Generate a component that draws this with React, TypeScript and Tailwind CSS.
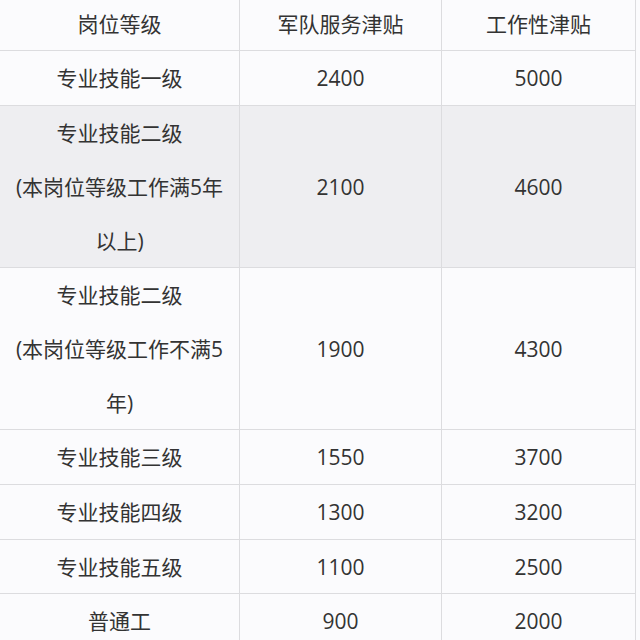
type Row = {
  grade: string[]
  service: string
  work: string
  shaded?: boolean
  h: string
}

const rows: Row[] = [
  { grade: ['专业技能一级'], service: '2400', work: '5000', h: 'h-[55px]' },
  {
    grade: ['专业技能二级', '(本岗位等级工作满5年', '以上)'],
    service: '2100',
    work: '4600',
    shaded: true,
    h: 'h-[162px]',
  },
  {
    grade: ['专业技能二级', '(本岗位等级工作不满5', '年)'],
    service: '1900',
    work: '4300',
    h: 'h-[162px]',
  },
  { grade: ['专业技能三级'], service: '1550', work: '3700', h: 'h-[55px]' },
  { grade: ['专业技能四级'], service: '1300', work: '3200', h: 'h-[55px]' },
  { grade: ['专业技能五级'], service: '1100', work: '2500', h: 'h-[54px]' },
  { grade: ['普通工'], service: '900', work: '2000', h: 'h-[55px]' },
]

function Cell({ children, className = '' }: { children: React.ReactNode; className?: string }) {
  return (
    <div className={`flex flex-col items-center justify-center text-center border-r border-b border-[#dcdcdf] ${className}`}>
      {children}
    </div>
  )
}

export default function App() {
  return (
    <div
      className="w-[640px] h-[640px] overflow-hidden bg-[#fbfbfd] text-[#333333] text-[21px] leading-[54px]"
      style={{ fontFamily: '"Open Sans", "Noto Sans CJK SC", sans-serif' }}
    >
      <div className="grid grid-cols-[240px_202px_194px]">
        {/* Header */}
        <Cell className="h-[51px] pb-[2px]">岗位等级</Cell>
        <Cell className="h-[51px] pb-[2px]">军队服务津贴</Cell>
        <Cell className="h-[51px] pb-[2px]">工作性津贴</Cell>

        {rows.map((r, i) => {
          const bg = r.shaded ? 'bg-[#eeeef1]' : ''
          return (
            <div key={i} className="contents">
              <Cell className={`${r.h} ${bg}`}>
                {r.grade.map((line, j) => (
                  <span key={j} className="block whitespace-nowrap">{line}</span>
                ))}
              </Cell>
              <Cell className={`${r.h} ${bg}`}>{r.service}</Cell>
              <Cell className={`${r.h} ${bg}`}>{r.work}</Cell>
            </div>
          )
        })}
      </div>
    </div>
  )
}
